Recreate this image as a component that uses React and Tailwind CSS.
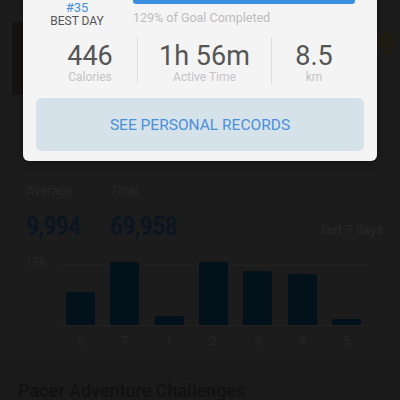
import React from "react";

const bars = [
  { label: "6", h: 33 },
  { label: "7", h: 63 },
  { label: "1", h: 9 },
  { label: "2", h: 63 },
  { label: "3", h: 54 },
  { label: "4", h: 51 },
  { label: "5", h: 6 },
];

export default function App() {
  return (
    <div className="w-[400px] h-[400px] relative overflow-hidden bg-[#1c1c1c] font-['Roboto',sans-serif]">
      {/* background page (dimmed) */}
      <div className="flex items-start pt-[22px]">
        <div className="ml-[12px] w-[60px] h-[73px] bg-[#141311]" />
        <div className="ml-auto mr-[4px] mt-[8px]">
          <svg width="18" height="26" viewBox="0 0 18 26" fill="none">
            <path d="M9 2 L16 13 L9 24 L2 13 Z" stroke="#221c0d" strokeWidth="3" />
            <path d="M9 9 L12 13 L9 17 L6 13 Z" fill="#221c0d" />
          </svg>
        </div>
      </div>

      <div className="flex px-[26px] mt-[88px]">
        <div className="w-[84px] flex flex-col">
          <span className="text-[13px] leading-[16px] text-[#272727]">Average</span>
          <span className="mt-[12px] text-[26px] leading-[30px] font-bold tracking-[-0.5px] text-[#0b1520] scale-x-[0.86] origin-left">9,994</span>
        </div>
        <div className="flex flex-col">
          <span className="text-[13px] leading-[16px] text-[#272727]">Total</span>
          <span className="mt-[12px] text-[26px] leading-[30px] font-bold tracking-[-0.5px] text-[#0b1520] scale-x-[0.86] origin-left">69,958</span>
        </div>
        <div className="ml-auto mr-[-9px] self-end mb-[3px] text-[13px] leading-[16px] text-[#282828]">last 7 days</div>
      </div>

      <div className="flex mt-[17px] ml-[25px]">
        <div className="w-[33px] text-[13px] leading-[16px] text-[#262626] mt-[-3px]">15k</div>
        <div className="w-[311px] flex flex-col mt-[7px]">
          <div className="h-[61px] border-t border-b border-[#222222] flex items-end">
            {bars.map((b) => (
              <div key={b.label} className="flex-1 flex justify-center">
                <div className="w-[29px] bg-[#03111b] rounded-t-[2px]" style={{ height: b.h }} />
              </div>
            ))}
          </div>
          <div className="flex mt-[7px]">
            {bars.map((b) => (
              <div key={b.label} className="flex-1 text-center text-[13px] leading-[16px] text-[#262626]">
                {b.label}
              </div>
            ))}
          </div>
        </div>
      </div>

      <div className="mt-[11px] border-t border-[#181818] bg-[#1a1a1a] h-[60px] px-[18px] pt-[19px]">
        <span className="text-[18px] leading-[22px] font-medium text-[#111111]">Pacer Adventure Challenges</span>
      </div>

      {/* modal */}
      <div className="absolute left-[23px] top-[-40px] w-[354px] h-[201px] bg-[#f4f4f4] rounded-[6px] shadow-[0_2px_6px_rgba(0,0,0,0.4)] pt-[30px] flex flex-col">
        <div className="flex h-[36px]">
          <div className="ml-[9px] w-[90px] flex flex-col items-center">
            <span className="text-[12px] leading-[12px] text-[#555]">RANK</span>
            <span className="text-[13px] leading-[12px] text-[#4a90d9]">#35</span>
            <span className="text-[12px] leading-[12px] text-[#555] mt-[1px]">BEST DAY</span>
          </div>
          <div className="ml-[11px] w-[222px] flex flex-col pt-[8px]">
            <div className="h-[6px] rounded-full bg-[#3a8fe0]" />
            <span className="mt-[7px] text-[12.5px] leading-[14px] text-[#bdbdbd]">129% of Goal Completed</span>
          </div>
        </div>

        <div className="flex ml-[20px] mt-[11px] h-[47px]">
          <div className="w-[94px] flex flex-col items-center pt-[5px]">
            <span className="text-[27px] leading-[28px] text-[#555]">446</span>
            <span className="text-[12px] leading-[14px] text-[#c4c4c4]">Calories</span>
          </div>
          <div className="w-[134px] border-l border-[#dedede] flex flex-col items-center pt-[5px]">
            <span className="text-[27px] leading-[28px] text-[#555]">1h 56m</span>
            <span className="text-[12px] leading-[14px] text-[#c4c4c4]">Active Time</span>
          </div>
          <div className="w-[85px] border-l border-[#dedede] flex flex-col items-center pt-[5px]">
            <span className="text-[27px] leading-[28px] text-[#555]">8.5</span>
            <span className="text-[12px] leading-[14px] text-[#c4c4c4]">km</span>
          </div>
        </div>

        <div className="mx-[13px] mt-[14px] h-[53px] rounded-[6px] bg-[#d5e2ea] flex items-center justify-center">
          <span className="text-[15.5px] leading-[18px] text-[#4a90d9]">SEE PERSONAL RECORDS</span>
        </div>
      </div>
    </div>
  );
}
